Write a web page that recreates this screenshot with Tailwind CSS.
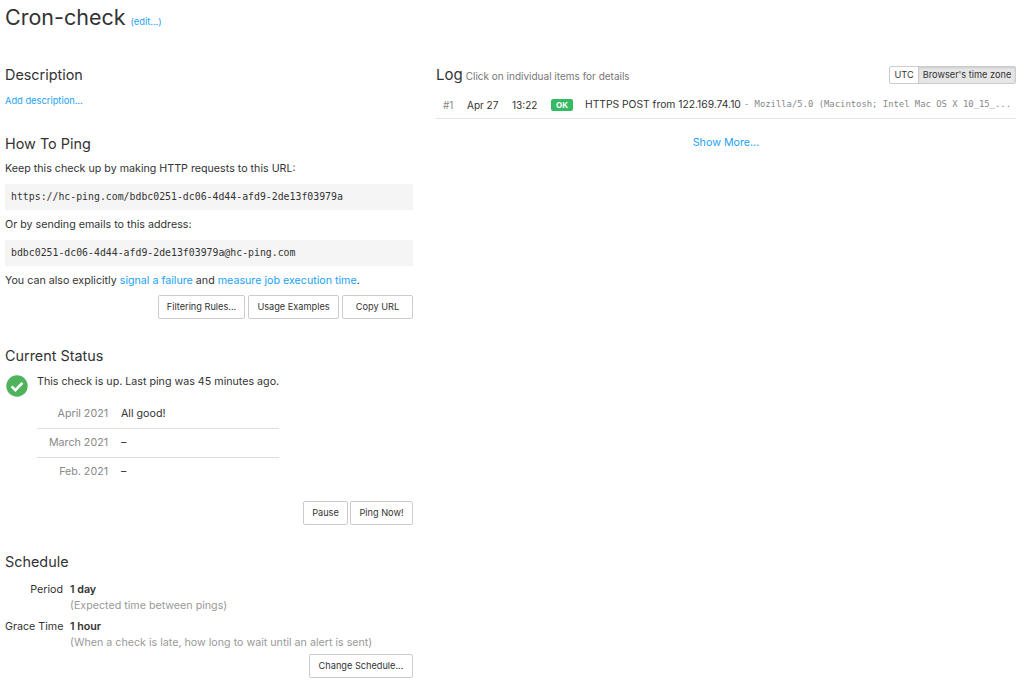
<!DOCTYPE html>
<html lang="en">
<head>
    <meta charset="UTF-8">
    <title>Cron-check</title>
    <script src="https://cdn.jsdelivr.net/npm/@tailwindcss/browser@4"></script>
</head>
<body class="bg-white text-[#333] font-['Inter',sans-serif] text-[10.7px] overflow-hidden">
    <div class="w-[1024px] h-[691px] overflow-hidden px-[5px]">
        <header class="h-[34px] flex items-baseline pt-[1px]">
            <h1 class="text-[21.5px] leading-[32px]">Cron-check</h1>
            <a class="ml-[5px] text-[9.3px] text-[#22a1f5]">(edit...)</a>
        </header>

        <div class="flex mt-[30px]">
            <!-- left column -->
            <div class="w-[408px] shrink-0">
                <section class="h-[70px]">
                    <h2 class="text-[14.4px] leading-[22px]">Description</h2>
                    <a class="block mt-[8px] text-[9.3px] leading-[14px] text-[#22a1f5]">Add description...</a>
                </section>

                <section class="mt-[-1px]">
                    <h2 class="text-[14.4px] leading-[22px]">How To Ping</h2>
                    <p class="mt-[6px] leading-[16px]">Keep this check up by making HTTP requests to this URL:</p>
                    <div class="mt-[7px] h-[26px] flex items-center px-[6px] bg-[#f5f5f5] font-['DejaVu_Sans_Mono',monospace] text-[9.85px]">https://hc-ping.com/bdbc0251-dc06-4d44-afd9-2de13f03979a</div>
                    <p class="mt-[7px] leading-[16px]">Or by sending emails to this address:</p>
                    <div class="mt-[7px] h-[26px] flex items-center px-[6px] bg-[#f5f5f5] font-['DejaVu_Sans_Mono',monospace] text-[9.85px]">bdbc0251-dc06-4d44-afd9-2de13f03979a@hc-ping.com</div>
                    <p class="mt-[7px] leading-[16px]">You can also explicitly <a class="text-[#22a1f5]">signal a failure</a> and <a class="text-[#22a1f5]">measure job execution time</a>.</p>
                    <div class="mt-[6px] flex justify-end gap-[3px]">
                        <button class="h-[24px] w-[87px] border border-[#ccc] rounded-[2px] text-[9.2px]">Filtering Rules...</button>
                        <button class="h-[24px] w-[91px] border border-[#ccc] rounded-[2px] text-[9.2px]">Usage Examples</button>
                        <button class="h-[24px] w-[71px] border border-[#ccc] rounded-[2px] text-[9.2px]">Copy URL</button>
                    </div>
                </section>

                <section class="mt-[26px]">
                    <h2 class="text-[14.4px] leading-[22px]">Current Status</h2>
                    <div class="mt-[8px] flex items-start">
                        <svg class="w-[22px] h-[22px] ml-[1px] shrink-0" viewBox="0 0 22 22">
                            <circle cx="11" cy="11" r="10.7" fill="#4fb35e"/>
                            <path d="M5.6 11.4l3.8 3.8 7-7.4" fill="none" stroke="#fff" stroke-width="2.6"/>
                        </svg>
                        <span class="ml-[9px] leading-[13px]">This check is up. Last ping was 45 minutes ago.</span>
                    </div>
                    <div class="ml-[32px] w-[242px] mt-[3px]">
                        <div class="h-[29px] flex items-center border-b border-[#ddd]"><span class="w-[71px] text-right text-[#888]">April 2021</span><span class="ml-[13px]">All good!</span></div>
                        <div class="h-[29px] flex items-center border-b border-[#ddd]"><span class="w-[71px] text-right text-[#888]">March 2021</span><span class="ml-[13px]">–</span></div>
                        <div class="h-[29px] flex items-center"><span class="w-[71px] text-right text-[#888]">Feb. 2021</span><span class="ml-[13px]">–</span></div>
                    </div>
                    <div class="mt-[14px] flex justify-end gap-[2px]">
                        <button class="h-[24px] w-[45px] border border-[#ccc] rounded-[2px] text-[9.2px]">Pause</button>
                        <button class="h-[24px] w-[63px] border border-[#ccc] rounded-[2px] text-[9.2px]">Ping Now!</button>
                    </div>
                </section>

                <section class="mt-[26px]">
                    <h2 class="text-[14.4px] leading-[22px]">Schedule</h2>
                    <div class="mt-[9px] flex">
                        <span class="w-[58px] text-right leading-[16px] whitespace-nowrap">Period</span>
                        <div class="ml-[7px] leading-[16px]"><b class="font-semibold">1 day</b><br><span class="text-[#999]">(Expected time between pings)</span></div>
                    </div>
                    <div class="mt-[5px] flex">
                        <span class="w-[58px] text-right leading-[16px] whitespace-nowrap">Grace Time</span>
                        <div class="ml-[7px] leading-[16px]"><b class="font-semibold">1 hour</b><br><span class="text-[#999]">(When a check is late, how long to wait until an alert is sent)</span></div>
                    </div>
                    <div class="mt-[3px] flex justify-end">
                        <button class="h-[24px] w-[104px] border border-[#ccc] rounded-[2px] text-[9.2px]">Change Schedule...</button>
                    </div>
                </section>
            </div>

            <!-- log column -->
            <div class="ml-[23px] w-[580px] shrink-0">
                <div class="flex items-center justify-between h-[22px]">
                    <div class="flex items-baseline">
                        <h2 class="text-[15px]">Log</h2>
                        <span class="ml-[3px] text-[10px] text-[#777]">Click on individual items for details</span>
                    </div>
                    <div class="flex h-[18px] text-[9.2px] border border-[#ccc] rounded-[2px]">
                        <span class="w-[28px] flex items-center justify-center">UTC</span>
                        <span class="w-[97px] flex items-center justify-center bg-[#e6e6e6] border-l border-[#ccc] shadow-[inset_0_1px_2px_rgba(0,0,0,0.12)]">Browser's time zone</span>
                    </div>
                </div>
                <div class="mt-[6px] h-[27px] flex items-center border-b border-[#e5e5e5] whitespace-nowrap text-[10px]">
                    <span class="ml-[7px] w-[24px] text-[#888]">#1</span>
                    <span class="w-[45px]">Apr 27</span>
                    <span class="w-[39px]">13:22</span>
                    <span class="w-[22px] h-[12px] flex items-center justify-center bg-[#36b964] text-white text-[8px] font-bold rounded-[2px]">OK</span>
                    <span class="ml-[12px] text-[10.3px]">HTTPS POST from 122.169.74.10</span>
                    <span class="ml-[3px] text-[#888] font-['DejaVu_Sans_Mono',monospace] text-[8.9px]">- Mozilla/5.0 (Macintosh; Intel Mac OS X 10_15_...</span>
                </div>
                <a class="block mt-[16px] text-center text-[#22a1f5] leading-[16px]">Show More...</a>
            </div>
        </div>
    </div>
</body>
</html>
